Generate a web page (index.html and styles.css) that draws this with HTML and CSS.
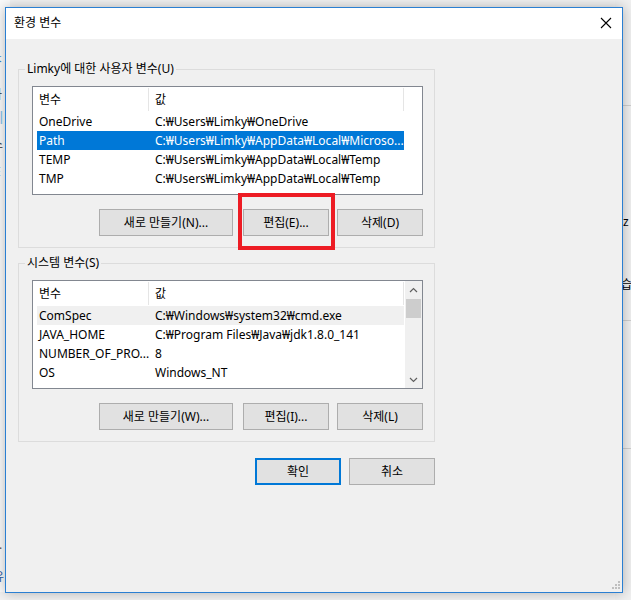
FILE: index.html
```html
<!DOCTYPE html>
<html>
	<head>
		<meta charset="UTF-8">
		<title>환경 변수</title>
		<link rel="stylesheet" href="styles.css">
	</head>

	<body>
		<div class="desktop">
			<!-- 뒤에 있는 창 조각 -->
			<div class="behind_left">
				<span class="frag f1">ㅈ</span>
				<span class="frag f2">자</span>
				<span class="frag f3">|</span>
				<span class="frag f4">소</span>
				<span class="frag f5">E</span>
				<span class="frag f6">.</span>
				<span class="frag f7">유</span>
			</div>
			<div class="behind_right">
				<div class="b_line l1"></div>
				<div class="b_line l2"></div>
				<div class="b_line l3"></div>
				<span class="frag f8">z</span>
				<span class="frag f9">습</span>
			</div>

			<div class="window">
				<div class="titlebar">
					<span class="title">환경 변수</span>
					<svg class="close" width="12" height="12" viewBox="0 0 12 12">
						<path d="M1 1 L11 11 M11 1 L1 11" stroke="#000" stroke-width="1.1" fill="none"/>
					</svg>
				</div>

				<div class="client">
					<fieldset class="group">
						<legend>Limky에 대한 사용자 변수(U)</legend>
						<div class="listbox">
							<div class="list_body">
								<div class="list_head">
									<div class="h_name">변수</div>
									<div class="h_value">값</div>
								</div>
								<div class="row"><span class="name">OneDrive</span><span class="value">C:₩Users₩Limky₩OneDrive</span></div>
								<div class="row selected"><span class="name">Path</span><span class="value">C:₩Users₩Limky₩AppData₩Local₩Microso...</span></div>
								<div class="row"><span class="name">TEMP</span><span class="value">C:₩Users₩Limky₩AppData₩Local₩Temp</span></div>
								<div class="row"><span class="name">TMP</span><span class="value">C:₩Users₩Limky₩AppData₩Local₩Temp</span></div>
							</div>
						</div>
						<div class="btn_row">
							<button class="btn wide">새로 만들기(N)...</button>
							<button class="btn">편집(E)...</button>
							<button class="btn last">삭제(D)</button>
						</div>
					</fieldset>

					<fieldset class="group second">
						<legend>시스템 변수(S)</legend>
						<div class="listbox">
							<div class="list_body">
								<div class="list_head">
									<div class="h_name">변수</div>
									<div class="h_value">값</div>
								</div>
								<div class="row inactive"><span class="name">ComSpec</span><span class="value">C:₩Windows₩system32₩cmd.exe</span></div>
								<div class="row"><span class="name">JAVA_HOME</span><span class="value">C:₩Program Files₩Java₩jdk1.8.0_141</span></div>
								<div class="row"><span class="name">NUMBER_OF_PRO...</span><span class="value">8</span></div>
								<div class="row"><span class="name">OS</span><span class="value">Windows_NT</span></div>
							</div>
							<div class="scrollbar">
								<div class="sb_btn">
									<svg width="9" height="6" viewBox="0 0 9 6"><path d="M1 5 L4.5 1.5 L8 5" stroke="#606060" stroke-width="1.2" fill="none"/></svg>
								</div>
								<div class="sb_thumb"></div>
								<div class="sb_track"></div>
								<div class="sb_btn">
									<svg width="9" height="6" viewBox="0 0 9 6"><path d="M1 1 L4.5 4.5 L8 1" stroke="#606060" stroke-width="1.2" fill="none"/></svg>
								</div>
							</div>
						</div>
						<div class="btn_row">
							<button class="btn wide">새로 만들기(W)...</button>
							<button class="btn">편집(I)...</button>
							<button class="btn last">삭제(L)</button>
						</div>
					</fieldset>

					<div class="dialog_btns">
						<button class="btn default">확인</button>
						<button class="btn last">취소</button>
					</div>

					<svg class="grip" width="10" height="10" viewBox="0 0 10 10">
						<rect x="7" y="0" width="2" height="2" fill="#bfbfbf"/>
						<rect x="4" y="3" width="2" height="2" fill="#bfbfbf"/>
						<rect x="7" y="3" width="2" height="2" fill="#bfbfbf"/>
						<rect x="1" y="6" width="2" height="2" fill="#bfbfbf"/>
						<rect x="4" y="6" width="2" height="2" fill="#bfbfbf"/>
						<rect x="7" y="6" width="2" height="2" fill="#bfbfbf"/>
					</svg>
				</div>
			</div>

			<!-- 빨간 표시 -->
			<div class="callout"></div>
		</div>
	</body>
</html>
```

FILE: styles.css
```css
* {
	margin: 0;
	padding: 0;
	box-sizing: border-box;
}

body {
	background: #f2f2f2;
	font-family: "Noto Sans", "Noto Sans CJK KR", sans-serif;
	font-size: 12px;
	color: #000;
}

.desktop {
	position: relative;
	width: 631px;
	height: 600px;
	overflow: hidden;
	background: #f2f2f2;
}

/* 뒤 창 */
.behind_left {
	position: absolute;
	left: 0;
	top: 0;
	width: 10px;
	height: 592px;
	background: #fbfbfb;
}

.behind_right {
	position: absolute;
	left: 615px;
	top: 0;
	width: 16px;
	height: 600px;
	background: #f0f0f0;
}

.b_line {
	position: absolute;
	left: 0;
	width: 16px;
	height: 1px;
	background: #cfcfcf;
}

.l1 { top: 105px; }
.l2 { top: 320px; }
.l3 { top: 448px; }

.frag {
	position: absolute;
	font-size: 12px;
	line-height: 14px;
}

.f1 { left: -8px; top: 53px; color: #3b86c9; }
.f2 { left: -9px; top: 88px; color: #333; }
.f3 { left: -2px; top: 110px; color: #8cc4ec; font-weight: bold; }
.f4 { left: -8px; top: 138px; color: #333; }
.f5 { left: -6px; top: 165px; color: #333; }
.f6 { left: -1px; top: 538px; color: #555; }
.f7 { left: -7px; top: 570px; color: #2f5fa8; }
.f8 { left: 8px; top: 215px; color: #000; }
.f9 { left: 6px; top: 278px; color: #000; }

/* 창 */
.window {
	position: absolute;
	left: 5px;
	top: 7px;
	width: 618px;
	height: 586px;
	border: 1px solid #2a7fd2;
	background: #f0f0f0;
	box-shadow: 0 0 12px rgba(0, 0, 0, 0.28);
	display: flex;
	flex-direction: column;
}

.titlebar {
	height: 31px;
	background: #fff;
	display: flex;
	align-items: center;
	justify-content: space-between;
	padding: 0 10px 0 8px;
}

.title {
	font-size: 12px;
	line-height: 16px;
	margin-top: -1px;
}

.close {
	margin-top: -2px;
}

.client {
	position: relative;
	flex: 1;
	padding: 0 0 0 12px;
}

.group {
	width: 417px;
	margin-top: 22px;
	border: 1px solid #dcdcdc;
	padding: 0 10px 11px 13px;
}

.group.second {
	margin-top: 7px;
}

.group legend {
	margin-left: -7px;
	padding: 0 2px;
	line-height: 16px;
}

.listbox {
	margin-top: 9px;
	width: 391px;
	height: 109px;
	border: 1px solid #828790;
	background: #fff;
	display: flex;
	overflow: hidden;
}

.list_body {
	flex: 1;
}

.list_head {
	display: flex;
	height: 25px;
	align-items: stretch;
}

.list_head div {
	margin: 1px 0;
	line-height: 23px;
	border-right: 1px solid #e5e5e5;
}

.h_name {
	width: 116px;
	padding-left: 6px;
}

.h_value {
	width: 255px;
	padding-left: 6px;
}

.row {
	display: flex;
	width: 367px;
	height: 19px;
	line-height: 19px;
	margin-left: 4px;
	white-space: nowrap;
}

.row .name {
	width: 112px;
	padding-left: 2px;
	overflow: hidden;
}

.row .value {
	flex: 1;
	padding-left: 6px;
	overflow: hidden;
}

.row.selected {
	background: #0078d7;
	color: #fff;
}

.row.inactive {
	background: #f0f0f0;
}

.scrollbar {
	width: 17px;
	background: #f0f0f0;
	display: flex;
	flex-direction: column;
}

.sb_btn {
	height: 17px;
	display: flex;
	align-items: center;
	justify-content: center;
}

.sb_thumb {
	height: 19px;
	margin: 1px 1px 0;
	background: #cdcdcd;
}

.sb_track {
	flex: 1;
}

.btn_row {
	display: flex;
	justify-content: flex-end;
	width: 391px;
	margin-top: 14px;
}

.btn {
	width: 86px;
	height: 27px;
	margin-right: 8px;
	border: 1px solid #adadad;
	background: #e1e1e1;
	font-family: "Noto Sans", "Noto Sans CJK KR", sans-serif;
	font-size: 12px;
	line-height: 16px;
	color: #000;
	outline: none;
}

.btn.wide {
	width: 134px;
	margin-right: 10px;
}

.btn.last {
	margin-right: 0;
}

.btn.default {
	border: 2px solid #0078d7;
}

.dialog_btns {
	display: flex;
	justify-content: flex-end;
	width: 417px;
	margin-top: 16px;
}

.grip {
	position: absolute;
	right: 1px;
	bottom: 1px;
}

.callout {
	position: absolute;
	left: 238px;
	top: 193px;
	width: 97px;
	height: 57px;
	border: 4px solid #ed1c24;
}
```
